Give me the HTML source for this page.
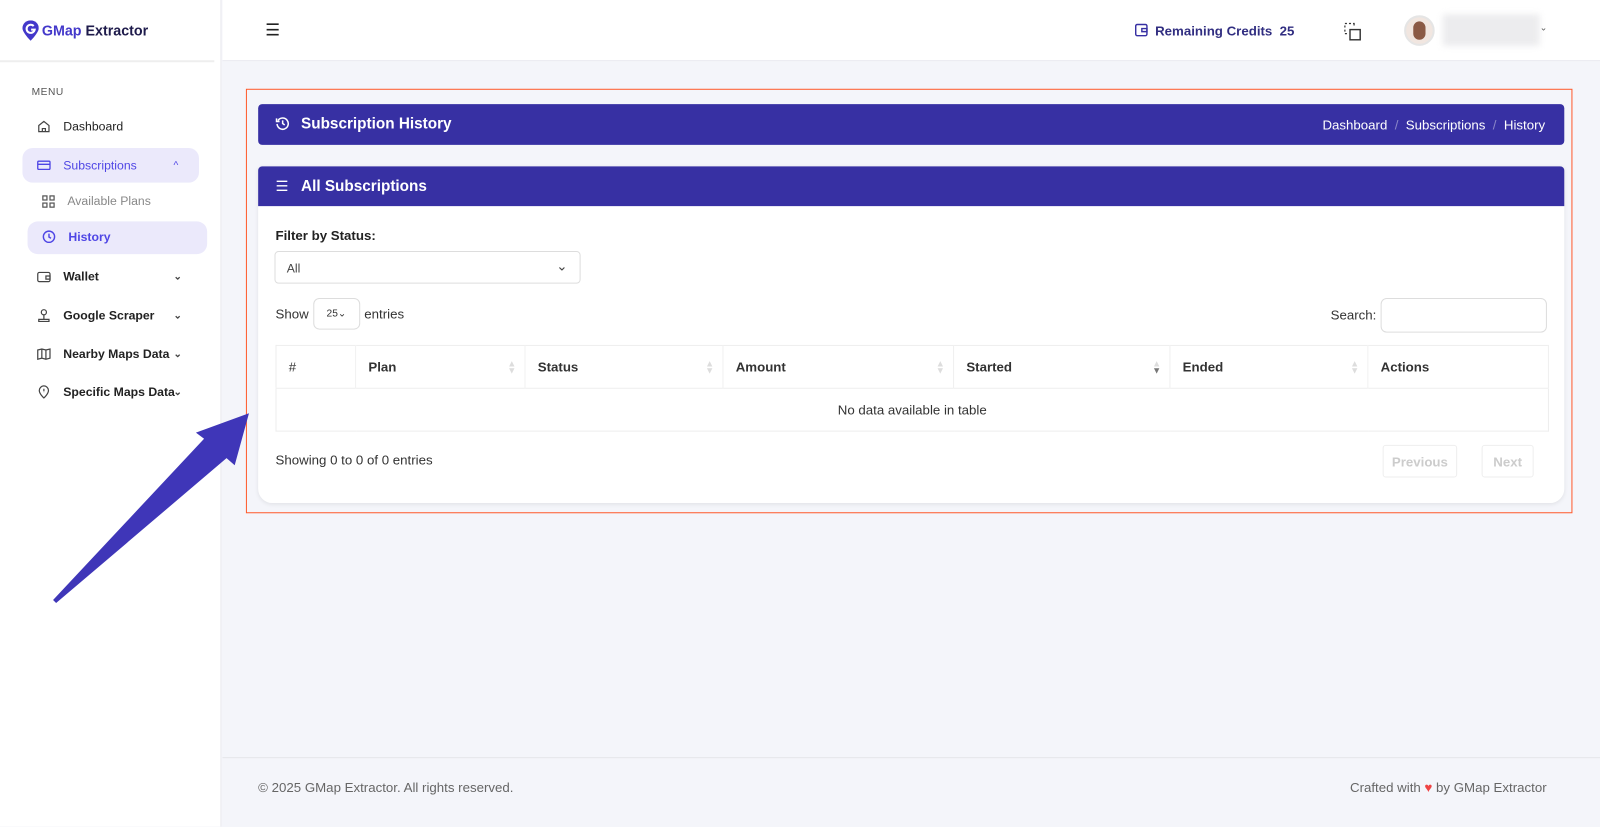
<!DOCTYPE html>
<html><head><meta charset="utf-8"><style>
*{box-sizing:border-box;margin:0;padding:0}
body{width:1600px;height:810px;overflow:hidden;background:#f4f5fa;font-family:"Liberation Sans",sans-serif;font-size:13px;color:#333;position:relative}
#w{position:absolute;left:0;top:0;width:1568px;height:794px;transform:scale(1.020408);transform-origin:0 0}
.a{position:absolute}
.side{left:0;top:0;width:217px;height:810px;background:#fff;border-right:1px solid #e8e8ee}
.nav{left:36px;font-size:12px;color:#222;display:flex;align-items:center}
.nav svg{margin-right:12px}
.chev{font-size:10px;color:#444}
.hd{background:#3730a3;color:#fff;font-weight:bold;font-size:15px;border-radius:4px 4px 0 0}
th{font-weight:bold;text-align:left;padding-left:12px;border-right:1px solid #f0f0f0;font-size:13px;color:#333;position:relative}
table{border-collapse:collapse}
.sort{position:absolute;right:8px;top:14px;font-size:9px;color:#ddd;line-height:7px}
</style></head><body><div id="w">
<div class="a side"></div>
<div class="a" style="left:0;top:59px;width:210px;height:2px;background:#eee"></div>
<svg class="a" style="left:22px;top:20px" width="16" height="20" viewBox="0 0 16 20"><path d="M8 0C3.5 0 0 3.3 0 7.6 0 12 8 20 8 20s8-8 8-12.4C16 3.3 12.5 0 8 0z" fill="#4338ca"/><path d="M11 5.5A4 4 0 1 0 12 9H8.5" stroke="#fff" stroke-width="2" fill="none"/></svg>
<div class="a" style="left:41px;top:22px;font-weight:bold;font-size:14px"><span style="color:#4338ca">GMap</span> <span style="color:#1e1b4b">Extractor</span></div>
<div class="a" style="left:31px;top:85px;font-size:10px;color:#555;letter-spacing:.5px">MENU</div>
<div class="a nav" style="top:117px"><svg width="14" height="14" viewBox="0 0 14 14" fill="none" stroke="#444" stroke-width="1.2"><path d="M2 6L7 2l5 4v6H2z M5.5 12V9h3v3"/></svg>Dashboard</div>
<div class="a" style="left:22px;top:145px;width:173px;height:34px;background:#ebe9fb;border-radius:10px"></div>
<div class="a nav" style="top:155px;color:#4f46e5"><svg width="14" height="14" viewBox="0 0 14 14" fill="none" stroke="#4f46e5" stroke-width="1.3"><rect x="1" y="3" width="12" height="8" rx="1"/><path d="M1 6h12"/></svg>Subscriptions<span style="position:absolute;left:134px;font-size:10px">^</span></div>
<div class="a nav" style="left:41px;top:190px;color:#888"><svg width="13" height="13" viewBox="0 0 13 13" fill="none" stroke="#555" stroke-width="1.2"><rect x="1" y="1" width="4" height="4"/><rect x="8" y="1" width="4" height="4"/><rect x="1" y="8" width="4" height="4"/><rect x="8" y="8" width="4" height="4"/></svg>Available Plans</div>
<div class="a" style="left:27px;top:217px;width:176px;height:32px;background:#ebe9fb;border-radius:10px"></div>
<div class="a nav" style="left:41px;top:225px;color:#4f46e5;font-weight:bold"><svg width="14" height="14" viewBox="0 0 14 14" fill="none" stroke="#4f46e5" stroke-width="1.4"><circle cx="7" cy="7" r="5.5"/><path d="M7 4v3.3l2 1.2"/></svg>History</div>
<div class="a nav" style="top:264px;font-weight:bold"><svg width="14" height="14" viewBox="0 0 14 14" fill="none" stroke="#444" stroke-width="1.2"><rect x="1" y="3" width="12" height="9" rx="1.5"/><path d="M9 6.5h4v3H9z"/></svg>Wallet<span class="chev" style="position:absolute;left:134px">⌄</span></div>
<div class="a nav" style="top:302px;font-weight:bold"><svg width="14" height="14" viewBox="0 0 14 14" fill="none" stroke="#444" stroke-width="1.2"><circle cx="7" cy="4" r="2.5"/><path d="M7 6.5v4M2 11h10v2H2z"/></svg>Google Scraper<span class="chev" style="position:absolute;left:134px">⌄</span></div>
<div class="a nav" style="top:340px;font-weight:bold"><svg width="14" height="14" viewBox="0 0 14 14" fill="none" stroke="#444" stroke-width="1.2"><path d="M1 3l4-1 4 1 4-1v9l-4 1-4-1-4 1zM5 2v9M9 3v9"/></svg>Nearby Maps Data<span class="chev" style="position:absolute;left:134px">⌄</span></div>
<div class="a nav" style="top:377px;font-weight:bold"><svg width="14" height="14" viewBox="0 0 14 14" fill="none" stroke="#444" stroke-width="1.2"><path d="M7 13s4.5-4 4.5-7.3A4.5 4.5 0 0 0 2.5 5.7C2.5 9 7 13 7 13z"/><path d="M7 4v2.5M7 8v.2"/></svg>Specific Maps Data<span class="chev" style="position:absolute;left:134px">⌄</span></div>

<div class="a" style="left:218px;top:0;width:1382px;height:60px;background:#fff;border-bottom:1px solid #e8e8ee"></div>
<div class="a" style="left:260px;top:20px;font-size:16px;color:#222">☰</div>
<svg class="a" style="left:1112px;top:23px" width="13" height="13" viewBox="0 0 13 13" fill="none" stroke="#3730a3" stroke-width="1.4"><rect x="1" y="1" width="11" height="11" rx="1.5"/><path d="M7 5h5v3H7z"/></svg>
<div class="a" style="left:1132px;top:23px;font-weight:bold;font-size:13px;color:#312e81">Remaining Credits&nbsp; 25</div>
<svg class="a" style="left:1317px;top:22px" width="18" height="18" viewBox="0 0 18 18" fill="none" stroke="#333" stroke-width="1.4"><rect x="6" y="7" width="10" height="10"/><path d="M1 1h2M5 1h2M9 1h1v2M1 3v2M1 7v2M1 11h2" stroke-width="1.2"/></svg>
<div class="a" style="left:1376px;top:15px;width:30px;height:30px;border-radius:50%;background:#f1e6e0;border:2px solid #e5e5e5"><div style="margin:4px 7px;width:12px;height:18px;border-radius:6px;background:#8b5a45"></div></div>
<div class="a" style="left:1414px;top:14px;width:95px;height:31px;background:#ececee;filter:blur(3px)"></div>
<div class="a" style="left:1509px;top:22px;font-size:9px;color:#555">⌄</div>

<div class="a" style="left:241px;top:87px;width:1300px;height:416px;border:1.5px solid #ff5a2c"></div>
<div class="a hd" style="left:253px;top:102px;width:1280px;height:40px;border-radius:4px"></div>
<svg class="a" style="left:270px;top:114px" width="14" height="14" viewBox="0 0 14 14" fill="none" stroke="#fff" stroke-width="1.5"><path d="M2.5 4A5.5 5.5 0 1 1 1.5 7.5"/><path d="M1 2v3h3M7 4v3l2 1.5"/></svg>
<div class="a" style="left:295px;top:113px;color:#fff;font-weight:bold;font-size:15px">Subscription History</div>
<div class="a" style="left:1296px;top:115px;color:#fff;font-size:13px">Dashboard <span style="color:#8a86c8">&nbsp;/&nbsp;</span> Subscriptions <span style="color:#8a86c8">&nbsp;/&nbsp;</span> History</div>

<div class="a" style="left:253px;top:163px;width:1280px;height:330px;background:#fff;border-radius:4px 4px 14px 14px;box-shadow:0 1px 4px rgba(0,0,0,.08)"></div>
<div class="a hd" style="left:253px;top:163px;width:1280px;height:39px"></div>
<div class="a" style="left:270px;top:174px;color:#fff;font-size:14px">☰</div>
<div class="a" style="left:295px;top:174px;color:#fff;font-weight:bold;font-size:15px">All Subscriptions</div>
<div class="a" style="left:270px;top:223px;font-weight:bold;font-size:13px;color:#222">Filter by Status:</div>
<div class="a" style="left:269px;top:246px;width:300px;height:32px;border:1px solid #ddd;border-radius:4px;padding:9px 11px;font-size:12px;color:#444">All<span style="position:absolute;right:12px;top:6px;font-size:13px">⌄</span></div>
<div class="a" style="left:270px;top:300px;font-size:13px">Show</div>
<div class="a" style="left:307px;top:292px;width:46px;height:31px;border:1px solid #ddd;border-radius:6px;font-size:10px;padding:9px 12px">25⌄</div>
<div class="a" style="left:357px;top:300px;font-size:13px">entries</div>
<div class="a" style="left:1304px;top:301px;font-size:13px">Search:</div>
<div class="a" style="left:1353px;top:292px;width:163px;height:34px;border:1px solid #ddd;border-radius:6px"></div>
<table class="a" style="left:270px;top:338px;width:1248px;border:1px solid #eee">
<tr style="height:42px;border-bottom:1px solid #eee"><th style="width:78px;font-weight:normal">#</th><th style="width:166px">Plan<span class="sort">▲<br>▼</span></th><th style="width:194px">Status<span class="sort">▲<br>▼</span></th><th style="width:226px">Amount<span class="sort">▲<br>▼</span></th><th style="width:212px">Started<span class="sort">▲<br><span style="color:#777">▼</span></span></th><th style="width:194px">Ended<span class="sort">▲<br>▼</span></th><th>Actions</th></tr>
<tr style="height:42px"><td colspan="7" style="text-align:center;font-size:13px">No data available in table</td></tr>
</table>
<div class="a" style="left:270px;top:443px;font-size:13px">Showing 0 to 0 of 0 entries</div>
<div class="a" style="left:1355px;top:436px;width:73px;height:32px;border:1px solid #eee;border-radius:3px;color:#ccc;text-align:center;line-height:32px;font-weight:bold">Previous</div>
<div class="a" style="left:1452px;top:436px;width:51px;height:32px;border:1px solid #eee;border-radius:3px;color:#ccc;text-align:center;line-height:32px;font-weight:bold">Next</div>

<svg class="a" style="left:0;top:0" width="260" height="600"><path d="M244 405L230 456 222 449 55 591 52 588 200 430 192 424z" fill="#3f36b8"/></svg>

<div class="a" style="left:218px;top:742px;width:1382px;height:68px;border-top:1px solid #e5e5ea;background:#f4f5fa"></div>
<div class="a" style="left:253px;top:764px;color:#666;font-size:13px">© 2025 GMap Extractor. All rights reserved.</div>
<div class="a" style="left:1323px;top:764px;color:#666;font-size:13px">Crafted with <span style="color:#ef4444">♥</span> by GMap Extractor</div>
</div></body></html>
